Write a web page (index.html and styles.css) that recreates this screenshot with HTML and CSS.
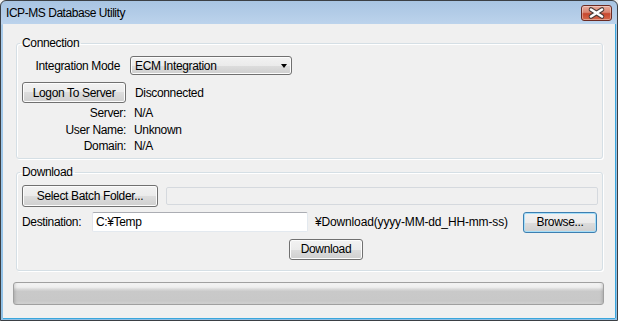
FILE: index.html
```html
<!DOCTYPE html>
<html lang="en">
<head>
  <meta charset="UTF-8">
  <title>ICP-MS Database Utility</title>
  <link rel="stylesheet" href="styles.css">
</head>
<body>
  <div class="window">
    <div class="titlebar">
      <span class="title">ICP-MS Database Utility</span>
      <button class="close" type="button">
        <svg width="29" height="14" viewBox="0 0 29 14">
          <path d="M9 3.5 L20 10.5 M20 3.5 L9 10.5" stroke="#4a3b38" stroke-width="4.6" stroke-linecap="round"/>
          <path d="M9 3.5 L20 10.5 M20 3.5 L9 10.5" stroke="#ffffff" stroke-width="2.6" stroke-linecap="round"/>
        </svg>
      </button>
    </div>

    <div class="client">
      <fieldset class="group connection">
        <legend>Connection</legend>
        <div class="row mode-row">
          <label class="mode-label">Integration Mode</label>
          <div class="combo">
            <span>ECM Integration</span>
            <span class="arrow"></span>
          </div>
        </div>
        <div class="row logon-row">
          <button class="btn logon" type="button">Logon To Server</button>
          <span class="status">Disconnected</span>
        </div>
        <dl class="info">
          <dt>Server:</dt><dd>N/A</dd>
          <dt>User Name:</dt><dd>Unknown</dd>
          <dt>Domain:</dt><dd>N/A</dd>
        </dl>
      </fieldset>

      <fieldset class="group download">
        <legend>Download</legend>
        <div class="row batch-row">
          <button class="btn batch" type="button">Select Batch Folder...</button>
          <div class="field disabled"></div>
        </div>
        <div class="row dest-row">
          <label class="dest-label">Destination:</label>
          <div class="field dest">C:¥Temp</div>
          <span class="suffix">¥Download(yyyy-MM-dd_HH-mm-ss)</span>
          <button class="btn browse" type="button">Browse...</button>
        </div>
        <div class="row action-row">
          <button class="btn start" type="button">Download</button>
        </div>
      </fieldset>

      <div class="progress"></div>
    </div>
  </div>
</body>
</html>
```

FILE: styles.css
```css
body {
  margin: 0;
  padding: 0;
  font-family: "Liberation Sans", Arial, sans-serif;
  font-size: 12px;
  letter-spacing: -0.35px;
  color: #000;
  background-color: #f0f0f0;
}

.window {
  width: 618px;
  height: 321px;
  box-sizing: border-box;
  border: 1px solid #3b3f44;
  border-radius: 6px 6px 0 0;
  background: linear-gradient(#a8c4e2, #bcd3ec 23px, #a9cbea 24px, #8fc0e6);
  display: flex;
  flex-direction: column;
  overflow: hidden;
}

.titlebar {
  height: 23px;
  display: flex;
  justify-content: space-between;
  align-items: flex-start;
  flex-shrink: 0;
}

.title {
  margin: 5px 0 0 5px;
  font-size: 12px;
  letter-spacing: -0.45px;
  line-height: 15px;
}

.close {
  width: 31px;
  height: 16px;
  margin: 4px 5px 0 0;
  padding: 0;
  border: 1px solid #6b2a22;
  border-radius: 3px;
  background: linear-gradient(#e9ab9c, #d98571 45%, #c8472e 55%, #d66a4c);
  box-shadow: inset 0 0 0 1px rgba(255, 255, 255, 0.35);
  display: flex;
  align-items: center;
  justify-content: center;
}

.client {
  flex: 1;
  margin: 0 2px 2px 2px;
  background-color: #f0f0f0;
  display: flex;
  flex-direction: column;
  box-shadow: 1px 0 0 #3aa6dc, 0 1px 0 #3aa6dc;
}

.group {
  margin: 0 12px 0 13px;
  padding: 6px 4px 3px 5px;
  border: 1px solid #d5dfe5;
  border-radius: 3px;
  box-shadow: inset 1px 1px 0 #fff, 1px 1px 0 #fff;
  min-width: 0;
}

.group legend {
  padding: 0 2px;
  margin-left: -2px;
  line-height: 13px;
}

.connection {
  margin-top: 13px;
}

.download {
  margin-top: 7px;
  padding-bottom: 10px;
}

.row {
  display: flex;
  align-items: center;
}

.mode-row {
  height: 19px;
}

.mode-label {
  width: 98px;
  text-align: right;
  margin-right: 10px;
}

.combo {
  width: 162px;
  height: 19px;
  box-sizing: border-box;
  border: 1px solid #707070;
  border-radius: 3px;
  background: linear-gradient(#f2f2f2, #ebebeb 50%, #dddddd 50%, #cfcfcf);
  box-shadow: inset 0 0 0 1px #fcfcfc;
  padding: 0 4px 0 4px;
  display: flex;
  align-items: center;
  justify-content: space-between;
}

.arrow {
  width: 0;
  height: 0;
  border-left: 3.5px solid transparent;
  border-right: 3.5px solid transparent;
  border-top: 4px solid #000;
}

.logon-row {
  margin-top: 7px;
}

.btn {
  font-family: inherit;
  font-size: 12px;
  letter-spacing: inherit;
  color: #000;
  height: 21px;
  padding: 0;
  border: 1px solid #707070;
  border-radius: 3px;
  background: linear-gradient(#f2f2f2, #ebebeb 50%, #dddddd 50%, #cfcfcf);
  box-shadow: inset 0 0 0 1px #fcfcfc;
}

.logon {
  width: 104px;
  margin-right: 9px;
}

.info {
  margin: 2px 0 0 0;
  display: grid;
  grid-template-columns: 104px 1fr;
  column-gap: 8px;
  line-height: 16.5px;
}

.info dt {
  text-align: right;
}

.info dd {
  margin: 0;
}

.batch-row {
  height: 22px;
}

.batch {
  width: 136px;
  height: 22px;
  margin-right: 8px;
}

.field {
  box-sizing: border-box;
  border: 1px solid #abadb3;
  border-color: #abadb3 #e3e9ef #e3e9ef #e2e3ea;
  background-color: #fff;
  border-radius: 2px;
}

.field.disabled {
  flex: 1;
  height: 18px;
  background-color: #f0f0f0;
  border-color: #d5d9de;
}

.dest-row {
  margin-top: 5px;
  height: 21px;
}

.dest-label {
  width: 70px;
}

.field.dest {
  width: 216px;
  height: 20px;
  padding: 0 3px;
  line-height: 18px;
}

.suffix {
  margin-left: 7px;
  letter-spacing: -0.15px;
}

.browse {
  width: 74px;
  margin-left: auto;
  margin-right: 1px;
  border-color: #3c7fb1;
  box-shadow: inset 0 0 0 1px #a6def8;
  background: linear-gradient(#f2f2f2, #ebebeb 50%, #dddddd 50%, #cfcfcf);
}

.action-row {
  margin-top: 6px;
}

.start {
  width: 74px;
  margin-left: 267px;
}

.progress {
  margin: 11px 11px 0 10px;
  height: 23px;
  box-sizing: border-box;
  border: 1px solid #a0a0a0;
  border-radius: 3px;
  background: linear-gradient(#f4f4f4, #eeeeee 20%, #d8d8d8 30%, #c9c9c9 40%, #c8c8c8 85%, #d2d2d2);
  box-shadow: inset 3px 0 3px -2px rgba(0, 0, 0, 0.15), inset -3px 0 3px -2px rgba(0, 0, 0, 0.15);
}
```
